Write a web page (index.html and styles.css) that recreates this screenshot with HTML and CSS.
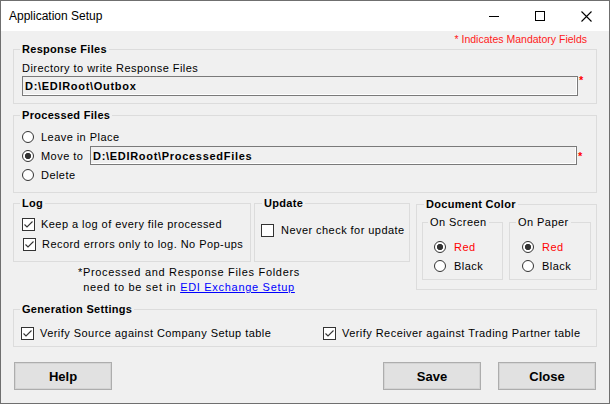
FILE: index.html
```html
<!DOCTYPE html>
<html>
<head>
<meta charset="utf-8">
<title>Application Setup</title>
<link rel="stylesheet" href="styles.css">
</head>
<body>
<div class="window">
  <div class="titlebar">
    <span class="title">Application Setup</span>
    <div class="controls">
      <span class="ctl"><svg width="10" height="10" viewBox="0 0 10 10"><line x1="0" y1="5.5" x2="10" y2="5.5" stroke="#000" stroke-width="1"/></svg></span>
      <span class="ctl"><svg width="10" height="10" viewBox="0 0 10 10"><rect x="0.5" y="0.5" width="9" height="9" fill="none" stroke="#000" stroke-width="1"/></svg></span>
      <span class="ctl"><svg width="11" height="11" viewBox="0 0 11 11"><path d="M0.5 0.5 L10.5 10.5 M10.5 0.5 L0.5 10.5" stroke="#000" stroke-width="1.1" fill="none"/></svg></span>
    </div>
  </div>
  <div class="content">
    <div class="mandatory">* Indicates Mandatory Fields</div>

    <section class="group g-response">
      <div class="gtitle">Response Files</div>
      <div class="gbody">
        <div class="label">Directory to write Response Files</div>
        <div class="field-row">
          <div class="textbox tb-response">D:\EDIRoot\Outbox</div>
          <span class="req">*</span>
        </div>
      </div>
    </section>

    <section class="group g-processed">
      <div class="gtitle">Processed Files</div>
      <div class="gbody">
        <div class="opt"><span class="radio"></span><span>Leave in Place</span></div>
        <div class="opt">
          <span class="opt-label"><span class="radio on"></span><span>Move to</span></span>
          <div class="textbox tb-processed">D:\EDIRoot\ProcessedFiles</div>
          <span class="req">*</span>
        </div>
        <div class="opt"><span class="radio"></span><span>Delete</span></div>
      </div>
    </section>

    <div class="mid">
      <div class="mid-left">
        <div class="mid-groups">
          <section class="group g-log">
            <div class="gtitle">Log</div>
            <div class="gbody">
              <div class="chk-row"><svg class="chk" width="13" height="13" viewBox="0 0 13 13"><rect x="0.5" y="0.5" width="12" height="12" fill="#fff" stroke="#333"/><polyline points="2.5,6.5 5,9 10.5,3.5" fill="none" stroke="#333" stroke-width="1.1"/></svg><span>Keep a log of every file processed</span></div>
              <div class="chk-row shift"><svg class="chk" width="13" height="13" viewBox="0 0 13 13"><rect x="0.5" y="0.5" width="12" height="12" fill="#fff" stroke="#333"/><polyline points="2.5,6.5 5,9 10.5,3.5" fill="none" stroke="#333" stroke-width="1.1"/></svg><span>Record errors only to log. No Pop-ups</span></div>
            </div>
          </section>
          <section class="group g-update">
            <div class="gtitle">Update</div>
            <div class="gbody">
              <div class="chk-row"><svg class="chk" width="13" height="13" viewBox="0 0 13 13"><rect x="0.5" y="0.5" width="12" height="12" fill="#fff" stroke="#333"/></svg><span>Never check for update</span></div>
            </div>
          </section>
        </div>
        <p class="note">*Processed and Response Files Folders<br>need to be set in <a href="#" class="link">EDI Exchange Setup</a></p>
      </div>

      <section class="group g-doc">
        <div class="gtitle">Document Color</div>
        <div class="gbody">
          <section class="sub sub-screen">
            <div class="stitle">On Screen</div>
            <div class="sbody">
              <div class="opt"><span class="radio on"></span><span class="red">Red</span></div>
              <div class="opt"><span class="radio"></span><span>Black</span></div>
            </div>
          </section>
          <section class="sub sub-paper">
            <div class="stitle">On Paper</div>
            <div class="sbody">
              <div class="opt"><span class="radio on"></span><span class="red">Red</span></div>
              <div class="opt"><span class="radio"></span><span>Black</span></div>
            </div>
          </section>
        </div>
      </section>
    </div>

    <section class="group g-gen">
      <div class="gtitle">Generation Settings</div>
      <div class="gbody">
        <div class="chk-row gen-first"><svg class="chk" width="13" height="13" viewBox="0 0 13 13"><rect x="0.5" y="0.5" width="12" height="12" fill="#fff" stroke="#333"/><polyline points="2.5,6.5 5,9 10.5,3.5" fill="none" stroke="#333" stroke-width="1.1"/></svg><span>Verify Source against Company Setup table</span></div>
        <div class="chk-row"><svg class="chk" width="13" height="13" viewBox="0 0 13 13"><rect x="0.5" y="0.5" width="12" height="12" fill="#fff" stroke="#333"/><polyline points="2.5,6.5 5,9 10.5,3.5" fill="none" stroke="#333" stroke-width="1.1"/></svg><span>Verify Receiver against Trading Partner table</span></div>
      </div>
    </section>

    <div class="buttons">
      <button class="btn">Help</button>
      <span class="spacer"></span>
      <button class="btn">Save</button>
      <button class="btn">Close</button>
    </div>
  </div>
</div>
</body>
</html>
```

FILE: styles.css
```css
html, body {
  margin: 0;
  padding: 0;
}
body {
  font-family: "Liberation Sans", Arial, sans-serif;
  font-size: 11px;
  letter-spacing: 0.45px;
  color: #000;
  background: #f0f0f0;
}
.window {
  width: 610px;
  height: 404px;
  box-sizing: border-box;
  border: 1px solid #6f6f6f;
  background: #f0f0f0;
  overflow: hidden;
}
.titlebar {
  height: 30px;
  background: #fff;
  display: flex;
  align-items: center;
}
.title {
  flex: 1;
  padding-left: 8px;
  font-size: 12px;
  letter-spacing: 0;
}
.controls {
  display: flex;
  height: 30px;
}
.ctl {
  width: 46px;
  height: 30px;
  display: flex;
  align-items: center;
  justify-content: center;
}
.ctl svg {
  display: block;
}
.content {
  padding: 3px 12px 0;
}
.mandatory {
  color: #ff1a1a;
  text-align: right;
  line-height: 10px;
  height: 10px;
  padding-right: 10px;
  font-size: 10.5px;
  letter-spacing: 0;
}

/* group boxes */
.group,
.sub {
  border: 1px solid #dcdcdc;
  box-sizing: border-box;
}
.gtitle,
.stitle {
  width: fit-content;
  margin-top: -7px;
  margin-left: 6px;
  padding: 0 2px;
  line-height: 13px;
  background: #f0f0f0;
}
.gtitle {
  font-weight: bold;
  letter-spacing: 0.3px;
}

.g-response {
  margin-top: 5px;
  width: 584px;
}
.g-response .gbody {
  padding: 5px 0 7px 8px;
}
.label {
  line-height: 14px;
}
.field-row {
  display: flex;
  align-items: flex-start;
  margin-top: 1px;
}
.textbox {
  box-sizing: border-box;
  border: 1px solid #7a7a7a;
  background: #f0f0f0;
  box-shadow: inset -1px -1px 0 #fff;
  font-weight: bold;
  letter-spacing: 0.7px;
  padding-left: 2px;
  display: flex;
  align-items: center;
}
.tb-response {
  width: 556px;
  height: 20px;
}
.req {
  color: #f00;
  font-weight: bold;
  font-size: 11px;
  line-height: 8px;
  margin-left: 1px;
  letter-spacing: 0;
}

.g-processed {
  margin-top: 11px;
  width: 584px;
}
.g-processed .gbody {
  padding: 5px 0 8px 8px;
}
.opt {
  display: flex;
  align-items: center;
  height: 19px;
}
.opt-label {
  display: flex;
  align-items: center;
  width: 68px;
}
.radio {
  display: inline-block;
  width: 12px;
  height: 12px;
  box-sizing: border-box;
  border: 1px solid #333;
  border-radius: 50%;
  background: #fff;
  margin-right: 7px;
  flex: none;
}
.radio.on {
  background: radial-gradient(circle, #333 0 2.8px, #fff 3.4px);
}
.tb-processed {
  width: 487px;
  height: 19px;
}

.mid {
  display: flex;
  align-items: flex-start;
  margin-top: 10px;
}
.mid-left {
  width: 397px;
}
.mid-groups {
  display: flex;
}
.g-log {
  width: 238px;
}
.g-log .gbody {
  padding: 4px 0 7px 8px;
}
.chk-row {
  display: flex;
  align-items: center;
  height: 20px;
}
.chk {
  display: block;
  flex: none;
  margin-right: 6px;
}
.chk-row.shift {
  margin-left: 1px;
}
.g-update {
  margin-left: 3px;
  width: 156px;
}
.g-update .gtitle {
  margin-left: 7px;
}
.g-update .gbody {
  padding: 10px 0 0 6px;
}
.g-update .chk {
  margin-right: 7px;
}
.note {
  margin: 3px 0 0;
  width: 352px;
  text-align: center;
  line-height: 15px;
  letter-spacing: 0.7px;
}
.link {
  color: #0000ff;
  text-decoration: underline;
}

.g-doc {
  margin-left: 6px;
  margin-top: 1px;
  width: 181px;
}
.g-doc .gtitle {
  margin-left: 7px;
}
.g-doc .gbody {
  display: flex;
  gap: 6px;
  padding: 11px 5px 9px 5px;
}
.stitle {
  margin-left: 5px;
}
.sub-screen {
  width: 81px;
}
.sub-paper {
  width: 82px;
}
.sub-paper .stitle {
  margin-left: 6px;
}
.sbody {
  padding: 8px 0 4px 11px;
}
.sub-paper .sbody {
  padding-left: 12px;
}
.sbody .radio {
  margin-right: 8px;
}
.red {
  color: #ff0000;
}

.g-gen {
  margin-top: 14px;
  width: 584px;
}
.g-gen .gbody {
  display: flex;
  padding: 7px 0 3px 7px;
}
.gen-first {
  width: 302px;
}

.buttons {
  display: flex;
  margin-top: 15px;
  padding: 0 1px;
  gap: 17px;
}
.spacer {
  flex: 1;
}
.btn {
  width: 98px;
  height: 28px;
  box-sizing: border-box;
  border: 1px solid #adadad;
  box-shadow: inset 0 0 0 1px #d4d4d4;
  background: #e1e1e1;
  font-family: "Liberation Sans", Arial, sans-serif;
  font-weight: bold;
  font-size: 13px;
  letter-spacing: 0;
  color: #000;
  padding: 0;
  margin: 0;
}
```
